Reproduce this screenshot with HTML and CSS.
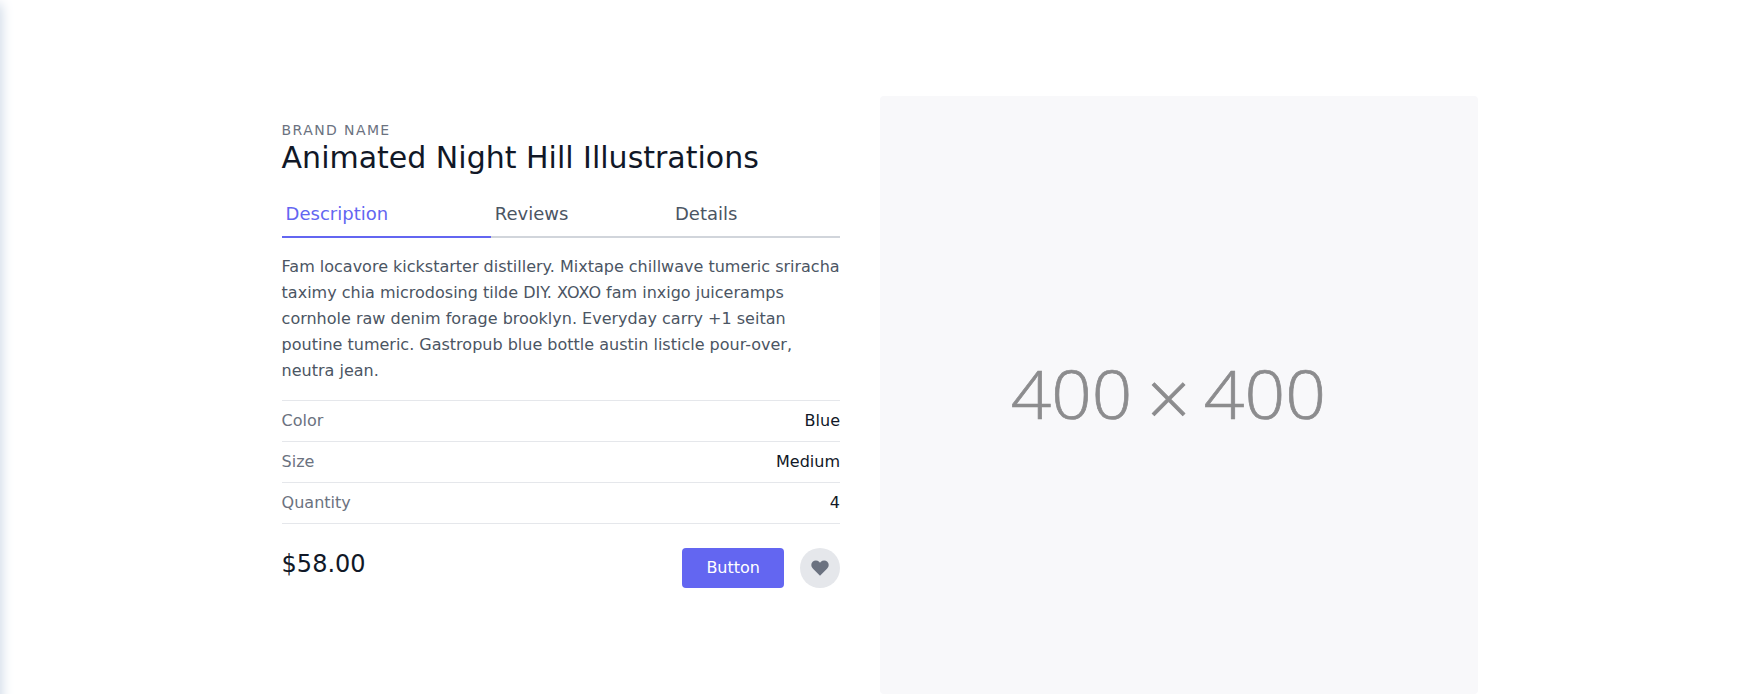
FILE: index.html
```html
<!DOCTYPE html>
<html lang="en">
<head>
<meta charset="utf-8">
<title>Animated Night Hill Illustrations</title>
<link rel="stylesheet" href="styles.css">
</head>
<body>
<div class="edge"></div>
<section class="product">
  <div class="info">
    <h2 class="brand">BRAND NAME</h2>
    <h1 class="title">Animated Night Hill Illustrations</h1>
    <nav class="tabs">
      <a class="tab active">Description</a>
      <a class="tab">Reviews</a>
      <a class="tab">Details</a>
    </nav>
    <p class="description">Fam locavore kickstarter distillery. Mixtape chillwave tumeric sriracha taximy chia microdosing tilde DIY. XOXO fam inxigo juiceramps cornhole raw denim forage brooklyn. Everyday carry +1 seitan poutine tumeric. Gastropub blue bottle austin listicle pour-over, neutra jean.</p>
    <div class="row"><span>Color</span><span class="value">Blue</span></div>
    <div class="row"><span>Size</span><span class="value">Medium</span></div>
    <div class="row last"><span>Quantity</span><span class="value">4</span></div>
    <div class="buy">
      <span class="price">$58.00</span>
      <button class="button">Button</button>
      <button class="heart" aria-label="Favorite"><svg width="20" height="20" viewBox="0 0 24 24" fill="currentColor"><path d="M20.84 4.61a5.5 5.5 0 00-7.78 0L12 5.67l-1.06-1.06a5.5 5.5 0 00-7.78 7.78l1.06 1.06L12 21.23l7.78-7.78 1.06-1.06a5.5 5.5 0 000-7.78z"/></svg></button>
    </div>
  </div>
  <div class="image">
    <svg viewBox="0 0 598 598">
      <text transform="translate(130.5 323) scale(1.06 1)">400</text>
      <text transform="translate(288.5 330) scale(1.13)" text-anchor="middle">×</text>
      <text transform="translate(323.5 323) scale(1.065 1)">400</text>
    </svg>
  </div>
</section>
</body>
</html>
```
FILE: styles.css
```css
*, ::before, ::after { box-sizing: border-box; }
body { margin: 0; height: 694px; overflow: hidden; background: #fff; color: #111827; font: 16px/24px "DejaVu Sans", sans-serif; }
h1, h2, p { margin: 0; font-weight: 400; }
.edge { position: absolute; left: -10px; top: 4px; width: 10px; height: 720px; box-shadow: 0 0 13px #bccbdd; }
.product { width: 1196.8px; margin: 0 auto; padding-top: 96px; display: flex; }
.info { width: 598.4px; padding: 24px 40px 24px 0; }
.brand { font-size: 14px; line-height: 20px; letter-spacing: 1.4px; color: #6b7280; }
.title { font-size: 30px; line-height: 36px; margin-bottom: 16px; }
.tabs { display: flex; margin-bottom: 16px; }
.tab { flex: 1 1 auto; padding: 8px 4px; font-size: 18px; line-height: 28px; color: #4b5563; border-bottom: 2px solid #d1d5db; }
.active { color: #6366f1; border-color: #6366f1; }
.description { line-height: 26px; color: #4b5563; margin-bottom: 16px; }
.row { display: flex; justify-content: space-between; border-top: 1px solid #e5e7eb; padding: 8px 0; color: #6b7280; }
.value { color: #111827; }
.last { border-bottom: 1px solid #e5e7eb; margin-bottom: 24px; }
.buy { display: flex; }
.price { font-size: 24px; line-height: 32px; margin-right: auto; }
.button { border: 0; border-radius: 4px; background: #6366f1; color: #fff; font: inherit; padding: 8px 24px; }
.heart { width: 40px; height: 40px; margin-left: 16px; padding: 0; border: 0; border-radius: 50%; display: flex; align-items: center; justify-content: center; background: #e5e7eb; color: #6b7280; }
.image { width: 598.4px; height: 598px; border-radius: 4px; background: #f8f8fa; overflow: hidden; }
.image svg { display: block; width: 100%; height: 100%; }
.image text { font: 300 67px "Open Sans", sans-serif; fill: #8c8c8e; stroke: #8c8c8e; stroke-width: 0.7px; filter: blur(0.4px); }
```
